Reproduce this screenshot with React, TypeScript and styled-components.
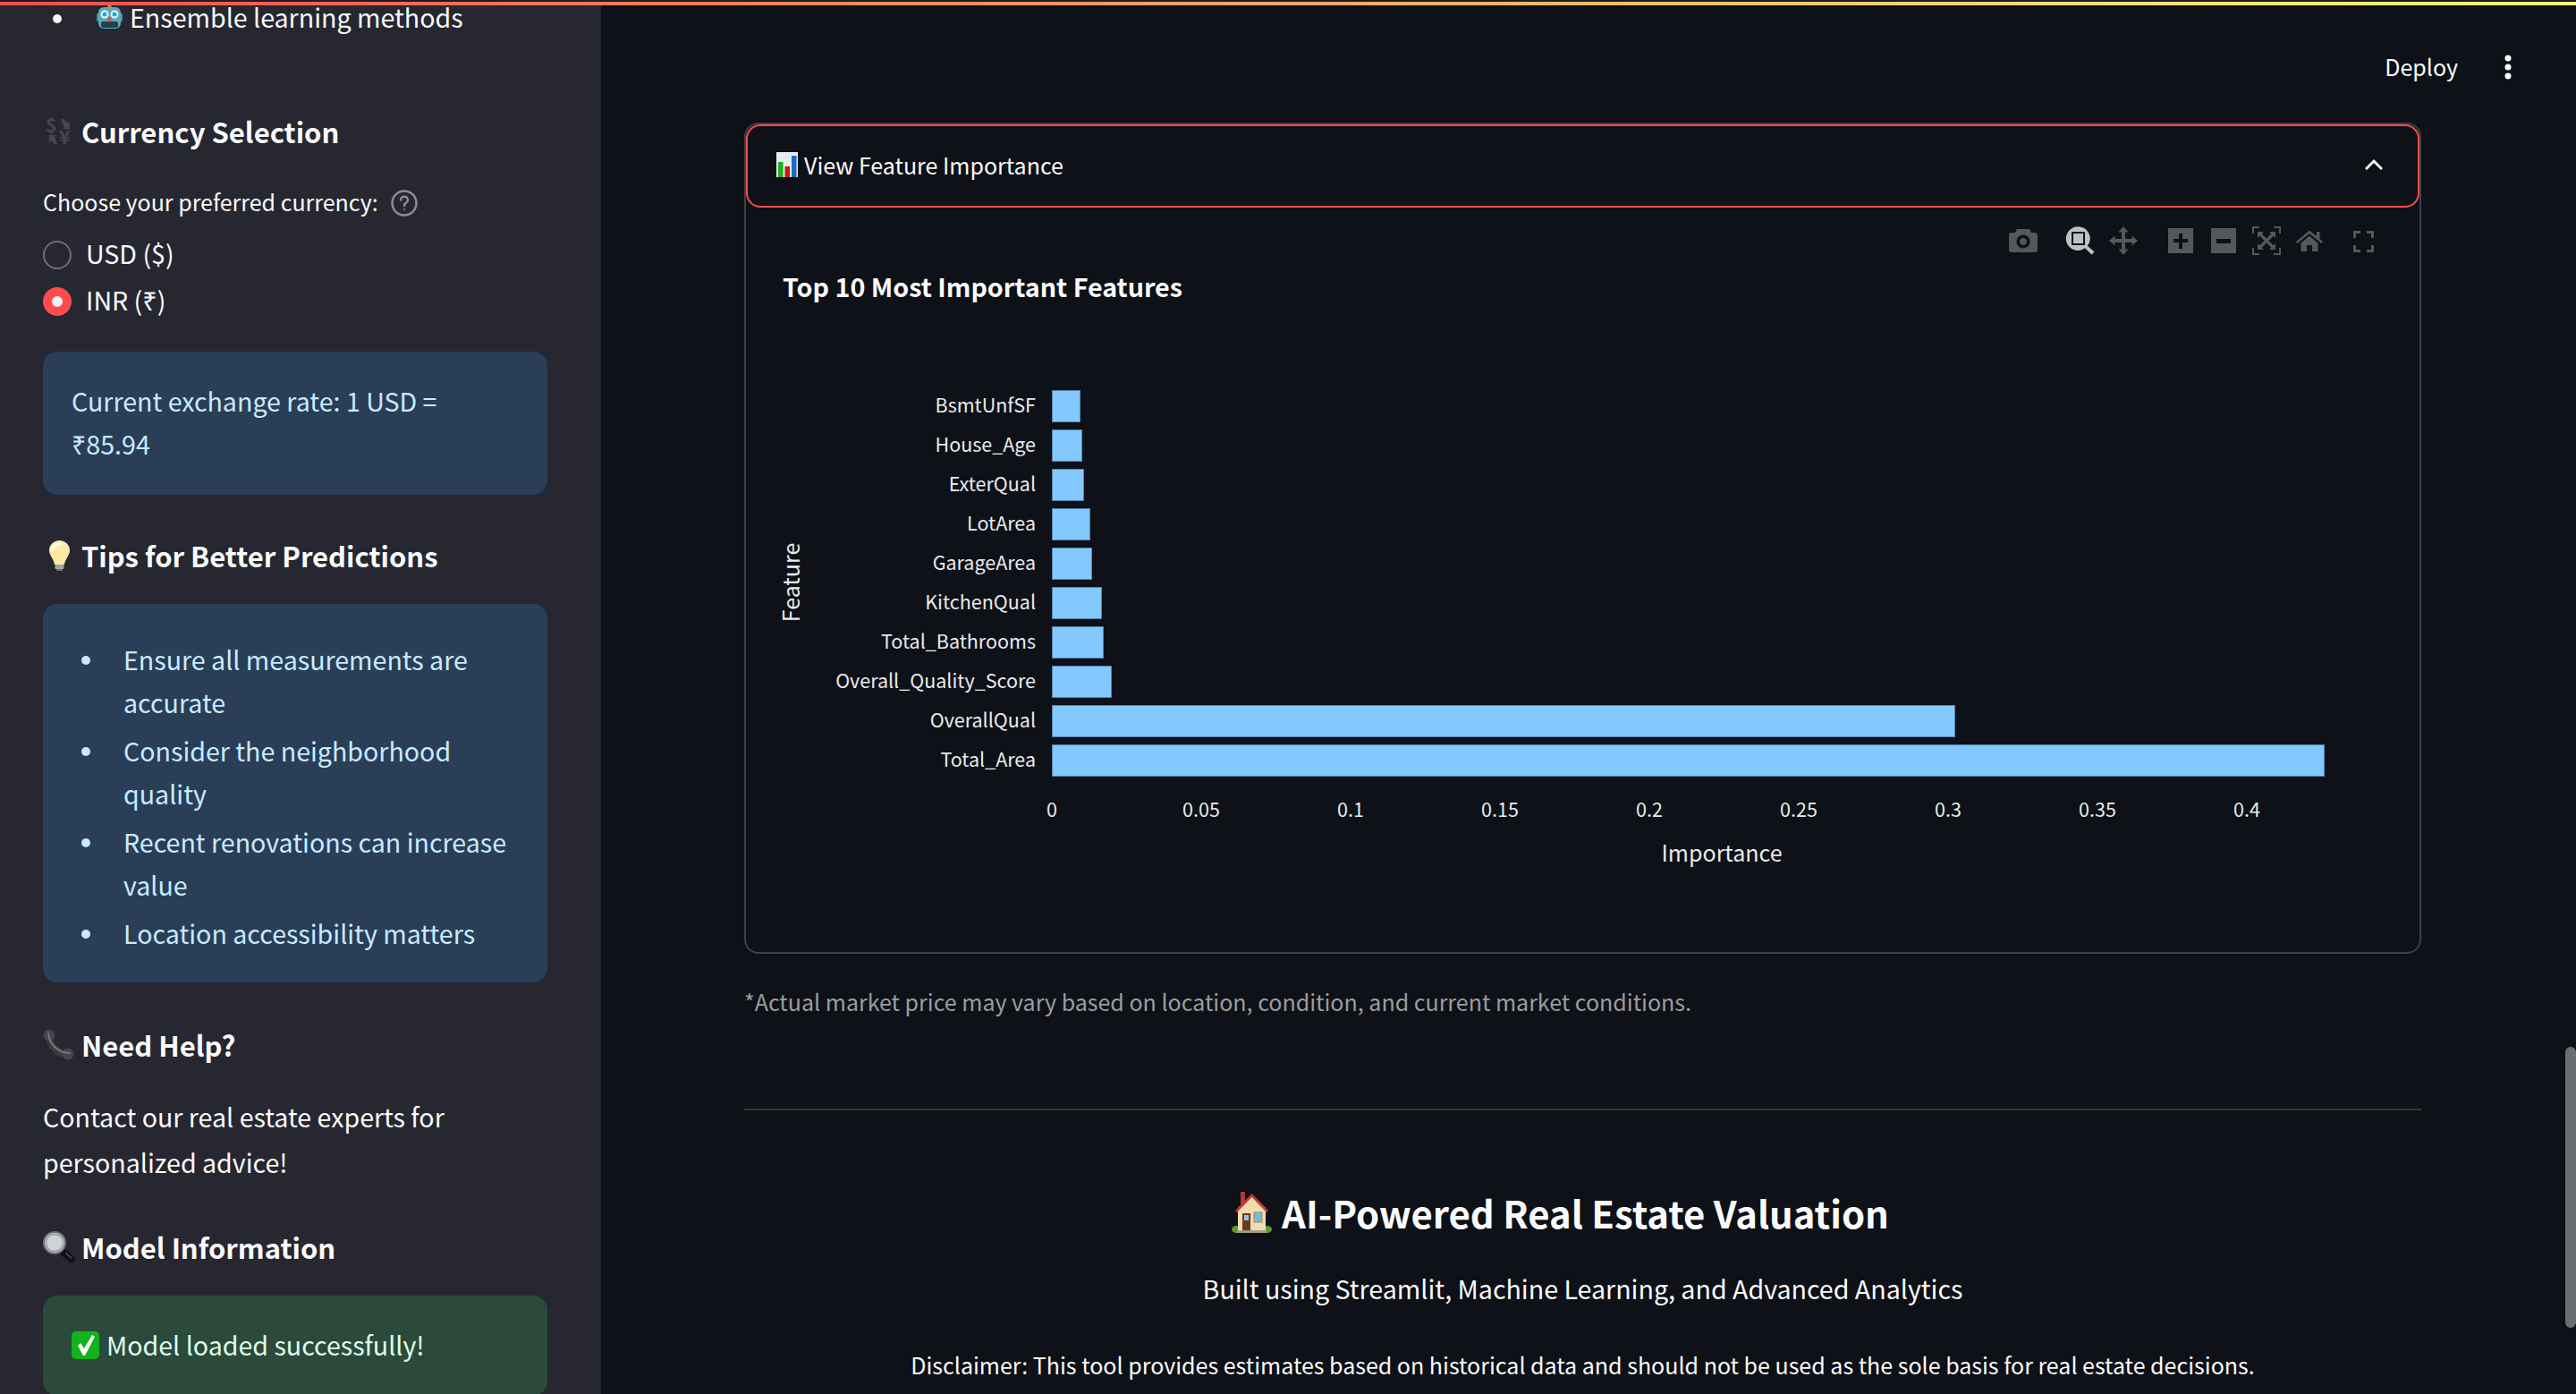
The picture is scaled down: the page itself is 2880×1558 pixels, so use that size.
import React from "react";
import styled, { createGlobalStyle } from "styled-components";

const FONT = `"Noto Sans CJK SC", "Noto Sans", sans-serif`;

const GlobalStyle = createGlobalStyle`
  html, body {
    margin: 0;
    padding: 0;
    width: 2880px;
    height: 1558px;
    overflow: hidden;
    background: #0e1117;
    font-family: ${FONT};
    color: #fafafa;
  }
  * {
    box-sizing: border-box;
  }
`;

const Page = styled.div`
  width: 2880px;
  height: 1558px;
  overflow: hidden;
  background: #1b1c21;
  display: flex;
  flex-direction: column;
  position: relative;
`;

const Decoration = styled.div`
  flex: none;
  height: 4px;
  margin-top: 2px;
  background: linear-gradient(90deg, #ff4b4b, #fffd80);
`;

const Body = styled.div`
  flex: 1;
  min-height: 0;
  display: flex;
`;

const Sidebar = styled.aside`
  flex: none;
  width: 672px;
  padding: 0 60px 0 48px;
  background: #262730;
  overflow: hidden;
`;

const TopList = styled.ul`
  list-style: none;
  margin: -11px 0 0;
  padding: 0;
`;

const TopItem = styled.li`
  display: flex;
  align-items: center;
  height: 48px;
  font-size: 28.6px;
  line-height: 48px;

  &::before {
    content: "";
    width: 10px;
    height: 10px;
    margin: 4px 39px 0 11px;
    border-radius: 50%;
    background: #fafafa;
  }

  svg {
    margin-right: 8px;
  }
`;

const SideHeading = styled.h3<{ $top: number }>`
  display: flex;
  align-items: center;
  height: 54px;
  padding-bottom: 4px;
  margin: ${(p) => p.$top}px 0 0;
  font-size: 31px;
  font-weight: 600;
  line-height: 50px;
`;

const HeadingIcon = styled.span`
  flex: none;
  width: 36px;
  margin-right: 7px;
  display: flex;
  align-items: center;
  justify-content: center;
`;

const RadioLabel = styled.div`
  display: flex;
  align-items: center;
  height: 44px;
  padding-bottom: 4px;
  margin-top: 29px;
  font-size: 25px;
  line-height: 40px;
  gap: 14px;

  svg {
    margin-top: 3px;
  }
`;

const RadioGroup = styled.div`
  margin-top: 10px;
`;

const RadioRow = styled.div`
  display: flex;
  align-items: flex-start;
  height: 52px;
  font-size: 28.6px;
  line-height: 48px;
  gap: 16px;
`;

const RadioDot = styled.span<{ $on?: boolean }>`
  flex: none;
  width: 32px;
  height: 32px;
  margin-top: 10px;
  border-radius: 50%;
  border: ${(p) => (p.$on ? "10px solid #ff4b4b" : "2px solid #6e6f76")};
  background: ${(p) => (p.$on ? "#f0f2f6" : "transparent")};
`;

const Alert = styled.div<{ $tone: "info" | "success"; $top: number }>`
  margin-top: ${(p) => p.$top}px;
  padding: 31px 32px 33px;
  border-radius: 16px;
  font-size: 28.6px;
  line-height: 48px;
  background: ${(p) => (p.$tone === "info" ? "#2b3e57" : "#2b4a3c")};
  color: ${(p) => (p.$tone === "info" ? "#c7ebff" : "#dffde9")};
`;

const SuccessLine = styled.div`
  display: flex;
  align-items: center;
  gap: 8px;
`;

const TipsBox = styled.ul`
  margin: 25px 0 0;
  padding: 38px 32px 31px;
  list-style: none;
  border-radius: 16px;
  background: #2b3e57;
  color: #c7ebff;
  font-size: 28.6px;
  line-height: 48px;
`;

const Tip = styled.li`
  position: relative;
  padding-left: 58px;
  margin-bottom: 6px;

  &:last-child {
    margin-bottom: 0;
  }

  &::before {
    content: "";
    position: absolute;
    left: 11px;
    top: 20px;
    width: 10px;
    height: 10px;
    border-radius: 50%;
    background: #c7ebff;
  }
`;

const HelpText = styled.p`
  margin: 25px 0 0;
  font-size: 28.6px;
  line-height: 51px;
`;

const Main = styled.main`
  flex: 1;
  min-width: 0;
  padding-left: 160px;
  background: #0e1117;
`;

const TopBar = styled.header`
  height: 131px;
  padding: 46px 72px 0 0;
  display: flex;
  justify-content: flex-end;
  align-items: flex-start;
  gap: 52px;
  font-size: 25px;
  line-height: 44px;

  svg {
    margin-top: 8px;
  }
`;

const Column = styled.div`
  width: 1875px;
`;

const Expander = styled.section`
  height: 929px;
  border: 2px solid #3d4046;
  border-radius: 16px;
`;

const ExpanderHeader = styled.div`
  height: 93px;
  padding: 0 39px 4px 32px;
  display: flex;
  align-items: center;
  border: 2px solid #ff4b4b;
  border-radius: 16px;
  font-size: 25px;
  gap: 7px;
`;

const HeaderTitle = styled.span`
  flex: 1;
`;

const Note = styled.p`
  margin: 31px 0 0;
  font-size: 25px;
  line-height: 44px;
  color: #9c9d9f;
`;

const Divider = styled.hr`
  margin: 98px 0 0;
  border: 0;
  height: 2px;
  background: #36383e;
`;

const Footer = styled.footer`
  text-align: center;
`;

const FooterTitle = styled.h2`
  display: flex;
  justify-content: center;
  align-items: center;
  gap: 11px;
  height: 70px;
  margin: 79px 0 0;
  padding-right: 50px;
  font-size: 41.8px;
  font-weight: 600;
  line-height: 70px;
`;

const FooterLead = styled.p`
  margin: 24px 0 0;
  font-size: 28.6px;
  line-height: 52px;
`;

const FooterNote = styled.p`
  margin: 37px 0 0;
  font-size: 25px;
  line-height: 44px;
`;

const ScrollThumb = styled.div`
  position: absolute;
  right: 0;
  top: 1170px;
  width: 12px;
  height: 314px;
  border-radius: 6px;
  background: #6b6d71;
`;

const ChartSvg = styled.svg`
  display: block;
`;

const features = [
  { name: "BsmtUnfSF", end: 1208 },
  { name: "House_Age", end: 1210 },
  { name: "ExterQual", end: 1212 },
  { name: "LotArea", end: 1219 },
  { name: "GarageArea", end: 1221 },
  { name: "KitchenQual", end: 1232 },
  { name: "Total_Bathrooms", end: 1234 },
  { name: "Overall_Quality_Score", end: 1243 },
  { name: "OverallQual", end: 2186 },
  { name: "Total_Area", end: 2599 },
];

const ticks = ["0", "0.05", "0.1", "0.15", "0.2", "0.25", "0.3", "0.35", "0.4"];

const MODE = "#55575c";

const ModeBar = () => (
  <g fill={MODE}>
    {/* camera */}
    <path
      fillRule="evenodd"
      d="M2253 260l2-4h14l2 4h4a3 3 0 0 1 3 3v16a3 3 0 0 1-3 3h-26a3 3 0 0 1-3-3v-16a3 3 0 0 1 3-3zM2262 262.500a7.500 7.500 0 1 0 .01 0zM2262 266a4 4 0 1 1-.01 0z"
    />
    {/* zoom box, the active one */}
    <path
      fill="#bfc1c3"
      fillRule="evenodd"
      d="M2323.300 253.300a13.300 13.300 0 0 1 10.500 21.500l7.700 6.700-3 3-7.500-7.200a13.300 13.300 0 1 1-7.700-24zM2316 259v15h15v-15zM2318 261h11v11h-11z"
    />
    {/* pan */}
    <path d="M2374 253l5.500 6.500h-3.500v7.500h7.500v-3.500l6.500 5.500-6.500 5.500v-3.500h-7.500v7.500h3.500l-5.500 6.500-5.500-6.500h3.500v-7.500h-7.500v3.500l-6.500-5.500 6.500-5.500v3.500h7.500v-7.500h-3.500z" />
    {/* zoom in */}
    <path
      fillRule="evenodd"
      d="M2424 255h28v28h-28zM2436 261v6h-6v4h6v7h4v-7h6v-4h-6v-6z"
    />
    {/* zoom out */}
    <path fillRule="evenodd" d="M2472 255h28v28h-28zM2478 267v5h16v-5z" />
    {/* autoscale */}
    <path d="M2518 253h8v2h-6v6h-2zM2542 253h8v8h-2v-6h-6zM2518 277h2v6h6v2h-8zM2548 277h2v8h-8v-2h6z" />
    <path d="M2524 259h7l-2.300 2.300 5.300 5.300 5.300-5.300L2537 259h7v7l-2.300-2.300-5.300 5.300 5.300 5.300L2544 272v7h-7l2.300-2.300-5.300-5.300-5.300 5.300L2531 279h-7v-7l2.300 2.300 5.300-5.300-5.300-5.300L2524 266z" />
    {/* home */}
    <path d="M2582 257.500l8 6.500v-5h3.500v8l3.500 3-1.500 2-13.500-11-13.500 11-1.500-2zM2572.500 271.500l9.500-7.700 9.500 7.700V281h-6.500v-7h-6v7h-6.500z" />
    {/* fullscreen */}
    <path d="M2631 258h8v3h-5v5h-3zM2646 258h8v8h-3v-5h-5zM2631 274h3v5h5v3h-8zM2651 274h3v8h-8v-3h5z" />
  </g>
);

const FeatureChart = () => (
  <ChartSvg width={1871} height={832} viewBox="834 232 1871 832">
    <ModeBar />
    <text x={875} y={332} fontSize={28.700} fontWeight={700} fill="#fafafa" fontFamily={FONT}>
      Top 10 Most Important Features
    </text>
    {features.map((f, i) => {
      const top = 436 + i * 44;
      return (
        <g key={f.name}>
          <rect
            x={1176.500}
            y={top + 0.500}
            width={f.end - 1177}
            height={35}
            fill="#83c9ff"
            stroke="#4f86b2"
          />
          <text
            x={1158}
            y={top + 25}
            textAnchor="end"
            fontSize={21.500}
            fill="#e8eaee"
            fontFamily={FONT}
          >
            {f.name}
          </text>
        </g>
      );
    })}
    {ticks.map((t, i) => (
      <text
        key={t}
        x={1176 + i * 167}
        y={913}
        textAnchor="middle"
        fontSize={21.500}
        fill="#e8eaee"
        fontFamily={FONT}
      >
        {t}
      </text>
    ))}
    <text x={1925} y={963} textAnchor="middle" fontSize={25} fill="#e8eaee" fontFamily={FONT}>
      Importance
    </text>
    <text
      transform="translate(894 651) rotate(-90)"
      textAnchor="middle"
      fontSize={25}
      fill="#e8eaee"
      fontFamily={FONT}
    >
      Feature
    </text>
  </ChartSvg>
);

const RobotEmoji = () => (
  <svg width="29" height="28" viewBox="0 0 29 28">
    <rect x="12.500" y="0" width="4" height="4" rx="1" fill="#f08a24" />
    <rect x="0" y="10" width="3" height="9" rx="1" fill="#3f8f9f" />
    <rect x="26" y="10" width="3" height="9" rx="1" fill="#3f8f9f" />
    <rect x="2" y="3" width="25" height="24" rx="6" fill="#5fa9b4" />
    <rect x="5" y="19" width="19" height="7" rx="2" fill="#24404e" />
    <circle cx="9" cy="11" r="4.500" fill="#e8f6fa" />
    <circle cx="20" cy="11" r="4.500" fill="#e8f6fa" />
    <circle cx="9" cy="11" r="2.500" fill="#22a7e0" />
    <circle cx="20" cy="11" r="2.500" fill="#22a7e0" />
    <path d="M14.500 13l3 5h-6z" fill="#e0483e" />
  </svg>
);

const CurrencyEmoji = () => (
  <svg width="30" height="32" viewBox="0 0 30 32" fontFamily={FONT} fontWeight="700" fontSize="21" fill="#47474e">
    <text x="0" y="17">$</text>
    <text x="15" y="30">¥</text>
    <path d="M17 3l2-2 6 6 2-2v8h-8l2-2zM13 29l-2 2-5-5-2 2v-8h8l-2 2z" />
  </svg>
);

const BulbEmoji = () => (
  <svg width="23" height="34" viewBox="0 0 23 34">
    <path d="M11.500 0C5 0 0 5 0 11c0 6 5 9 6 16h11c1-7 6-10 6-16 0-6-5-11-11.500-11z" fill="#ffe8a3" />
    <path d="M11.500 2c-5 0-9 4-9 9 0 1 .3 2 .7 3 2-6 8-10 14-9-1.500-1.800-3.500-3-5.700-3z" fill="#fffbe8" />
    <rect x="6.500" y="27" width="10" height="5" rx="1" fill="#a3a3a3" />
    <rect x="8" y="32" width="7" height="2" rx="1" fill="#6f6f6f" />
  </svg>
);

const PhoneEmoji = () => (
  <svg width="36" height="36" viewBox="0 0 36 36" fill="none" strokeLinecap="round">
    <path d="M7 7C7 20 18 29 29 28" stroke="#3a3b3f" strokeWidth="8" />
    <circle cx="7" cy="7" r="6.500" fill="#45464a" />
    <circle cx="28" cy="28" r="6.500" fill="#45464a" />
    <path d="M6 5C7 17 17 27 30 27" stroke="#77787c" strokeWidth="2" />
  </svg>
);

const MagnifierEmoji = () => (
  <svg width="36" height="36" viewBox="0 0 36 36" fill="none">
    <path d="M23 24l9 7" stroke="#111216" strokeWidth="8" strokeLinecap="round" />
    <path d="M26 25l6 5" stroke="#55585e" strokeWidth="1.500" strokeLinecap="round" />
    <circle cx="13" cy="13" r="12" fill="#c9ccd1" stroke="#6f7176" strokeWidth="2" />
    <circle cx="13" cy="13" r="9.500" fill="#cfd2d6" stroke="#9a9da2" strokeWidth="1.500" />
  </svg>
);

const CheckEmoji = () => (
  <svg width="31" height="31" viewBox="0 0 31 31">
    <rect width="31" height="31" rx="5" fill="#12b21d" />
    <path d="M7 16l3-3 4 6L23 4l3 2-11 21h-2z" fill="#fff" />
  </svg>
);

const ChartEmoji = () => (
  <svg width="24" height="28" viewBox="0 0 24 28">
    <rect width="24" height="28" fill="#e8edf2" />
    <rect x="2" y="11" width="5.500" height="17" fill="#17b21d" />
    <rect x="9.500" y="16" width="5.500" height="12" fill="#c3190f" />
    <rect x="17" y="4" width="5.500" height="24" fill="#1b6ec2" />
  </svg>
);

const HouseEmoji = () => (
  <svg width="45" height="46" viewBox="0 0 45 46">
    <rect x="10" y="0" width="5" height="14" fill="#b03a2e" />
    <ellipse cx="5" cy="42" rx="5" ry="4" fill="#5d9a2c" />
    <ellipse cx="40" cy="42" rx="5" ry="4" fill="#5d9a2c" />
    <path d="M7 18L22.500 3 38 18v26H7z" fill="#f1dcb0" />
    <path d="M4 21L22.500 2 41 21l-2 2L22.500 6 6 23z" fill="#c8362c" />
    <rect x="12" y="24" width="9" height="19" fill="#6a3a22" />
    <rect x="14" y="26" width="5" height="6" fill="#8fc7e8" />
    <rect x="25" y="23" width="9" height="11" fill="#77b8e2" stroke="#a88a5c" />
    <rect x="6" y="43" width="33" height="3" fill="#a59a8c" />
  </svg>
);

const HelpIcon = () => (
  <svg width="30" height="30" viewBox="0 0 30 30" fill="none" stroke="#8c8d92" strokeWidth="2.500">
    <circle cx="15" cy="15" r="13.500" />
    <path d="M11 11.500c0-5 8-5 8 0 0 3-4 3-4 6.500" strokeLinecap="round" />
    <circle cx="15" cy="22" r="1" fill="#8c8d92" stroke="none" />
  </svg>
);

const Chevron = () => (
  <svg width="20" height="14" viewBox="0 0 20 14" fill="none" stroke="#fafafa" strokeWidth="3">
    <path d="M1 12l9-9 9 9" />
  </svg>
);

const Kebab = () => (
  <svg width="8" height="30" viewBox="0 0 8 30" fill="#fafafa">
    <circle cx="4" cy="5" r="3.500" />
    <circle cx="4" cy="15" r="3.500" />
    <circle cx="4" cy="25" r="3.500" />
  </svg>
);

const tips = [
  "Ensure all measurements are accurate",
  "Consider the neighborhood quality",
  "Recent renovations can increase value",
  "Location accessibility matters",
];

export default function App() {
  return (
    <Page>
      <GlobalStyle />
      <Decoration />
      <Body>
        <Sidebar>
          <TopList>
            <TopItem>
              <RobotEmoji />
              Ensemble learning methods
            </TopItem>
          </TopList>

          <SideHeading $top={79}>
            <HeadingIcon>
              <CurrencyEmoji />
            </HeadingIcon>
            Currency Selection
          </SideHeading>
          <RadioLabel>
            Choose your preferred currency:
            <HelpIcon />
          </RadioLabel>
          <RadioGroup>
            <RadioRow>
              <RadioDot />
              USD ($)
            </RadioRow>
            <RadioRow>
              <RadioDot $on />
              INR (₹)
            </RadioRow>
          </RadioGroup>
          <Alert $tone="info" $top={30}>
            Current exchange rate: 1 USD = ₹85.94
          </Alert>

          <SideHeading $top={43}>
            <HeadingIcon>
              <BulbEmoji />
            </HeadingIcon>
            Tips for Better Predictions
          </SideHeading>
          <TipsBox>
            {tips.map((t) => (
              <Tip key={t}>{t}</Tip>
            ))}
          </TipsBox>

          <SideHeading $top={45}>
            <HeadingIcon>
              <PhoneEmoji />
            </HeadingIcon>
            Need Help?
          </SideHeading>
          <HelpText>Contact our real estate experts for personalized advice!</HelpText>

          <SideHeading $top={45}>
            <HeadingIcon>
              <MagnifierEmoji />
            </HeadingIcon>
            Model Information
          </SideHeading>
          <Alert $tone="success" $top={25}>
            <SuccessLine>
              <CheckEmoji />
              Model loaded successfully!
            </SuccessLine>
          </Alert>
        </Sidebar>

        <Main>
          <TopBar>
            Deploy
            <Kebab />
          </TopBar>
          <Column>
            <Expander>
              <ExpanderHeader>
                <ChartEmoji />
                <HeaderTitle>View Feature Importance</HeaderTitle>
                <Chevron />
              </ExpanderHeader>
              <FeatureChart />
            </Expander>
            <Note>*Actual market price may vary based on location, condition, and current market conditions.</Note>
            <Divider />
            <Footer>
              <FooterTitle>
                <HouseEmoji />
                AI-Powered Real Estate Valuation
              </FooterTitle>
              <FooterLead>Built using Streamlit, Machine Learning, and Advanced Analytics</FooterLead>
              <FooterNote>
                Disclaimer: This tool provides estimates based on historical data and should not be used as the sole
                basis for real estate decisions.
              </FooterNote>
            </Footer>
          </Column>
        </Main>
      </Body>
      <ScrollThumb />
    </Page>
  );
}
